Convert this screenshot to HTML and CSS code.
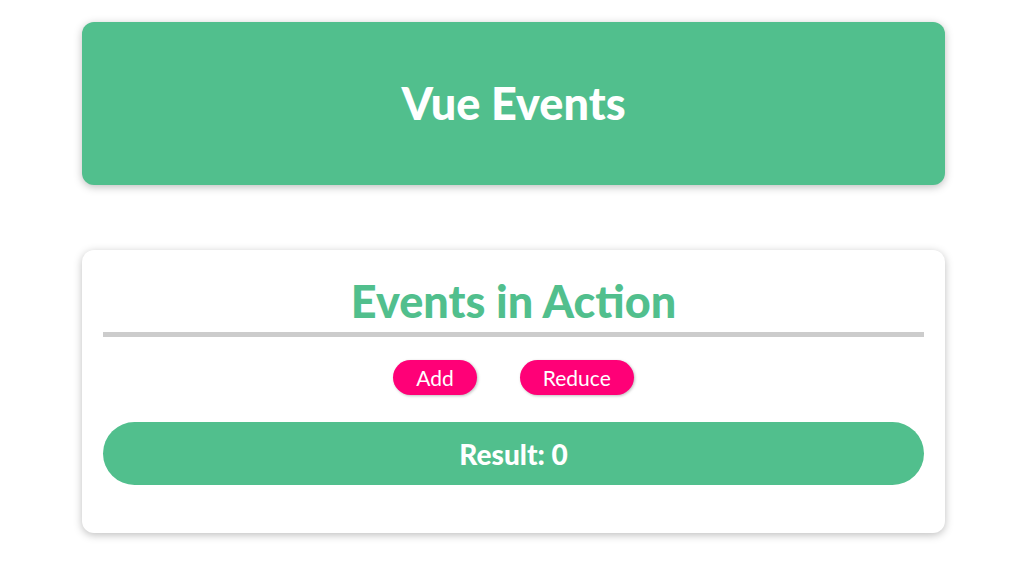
FILE: index.html
```html
<!DOCTYPE html>
<html lang="en">
<head>
<meta charset="utf-8">
<title>Vue Events</title>
<link rel="stylesheet" href="styles.css">
</head>
<body>
<header class="page-header">
  <h1 class="page-title">Vue Events</h1>
</header>
<section class="events-card">
  <h2 class="events-title">Events in Action</h2>
  <div class="actions">
    <button class="pill-btn">Add</button>
    <button class="pill-btn">Reduce</button>
  </div>
  <p class="result">Result: 0</p>
</section>
</body>
</html>
```
FILE: styles.css
```css
* { box-sizing: border-box; }
html, body { margin: 0; padding: 0; background: #ffffff; }
body {
  font-family: "Lato", "Noto Sans", sans-serif;
  padding: 22px 88px 30px 82px;
}
.page-header {
  height: 163px;
  background: #51bf8d;
  border-radius: 12px;
  box-shadow: 0 2px 8px rgba(0, 0, 0, 0.26);
  display: flex;
  align-items: center;
  justify-content: center;
}
.page-title {
  margin: 0;
  color: #ffffff;
  font-size: 45px;
  font-weight: 900;
  line-height: 1;
}
.events-card {
  margin-top: 65px;
  background: #ffffff;
  border-radius: 12px;
  box-shadow: 0 2px 8px rgba(0, 0, 0, 0.26);
  padding: 26px 21px 48px;
}
.events-title {
  margin: 0;
  color: #51bf8d;
  font-size: 45px;
  font-weight: 900;
  line-height: 50px;
  text-align: center;
  border-bottom: 5px solid #cccccc;
  padding-bottom: 6px;
}
.actions {
  display: flex;
  justify-content: center;
  gap: 43px;
  margin-top: 23px;
}
.pill-btn {
  height: 35px;
  padding: 0 23px;
  border: none;
  border-radius: 18px;
  background: #ff0077;
  color: #ffffff;
  font-family: inherit;
  font-size: 21px;
  box-shadow: 1px 1px 3px rgba(0, 0, 0, 0.26);
  cursor: pointer;
}
.result {
  margin: 27px 0 0;
  height: 63px;
  border-radius: 32px;
  background: #51bf8d;
  color: #ffffff;
  font-size: 28px;
  font-weight: 900;
  display: flex;
  align-items: center;
  justify-content: center;
}
```
